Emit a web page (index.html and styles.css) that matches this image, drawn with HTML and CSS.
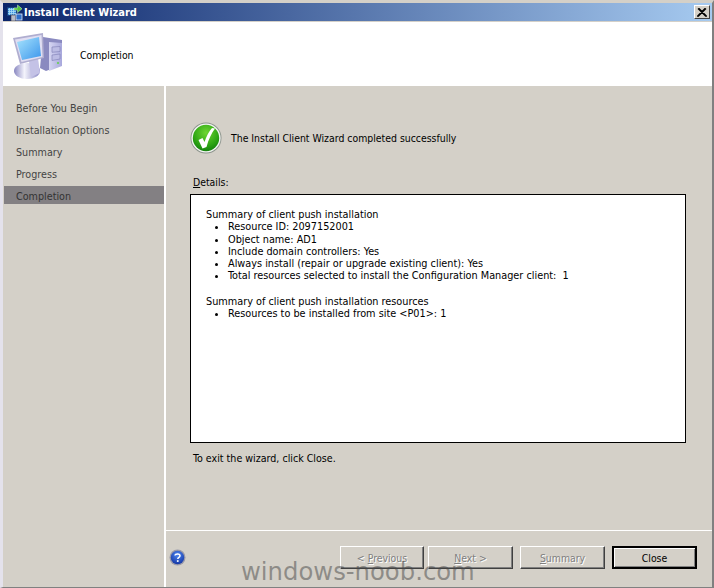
FILE: index.html
```html
<!DOCTYPE html>
<html lang="en">
<head>
<meta charset="utf-8">
<title>Install Client Wizard</title>
<link rel="stylesheet" href="styles.css">
</head>
<body>
<div class="window">
  <div class="titlebar">
    <svg class="title-icon" width="17" height="17" viewBox="0 0 17 17">
      <rect x="1.500" y="3.500" width="9" height="8" fill="#3f8fe0" stroke="#16407e" stroke-width="1"/>
      <path d="M3.500 4v7M5.500 4v7M7.500 4v7M2 5.500h8M2 7.500h8M2 9.500h8" stroke="#a8e0f8" stroke-width=".8"/>
      <path d="M8 4h3.500V1L16 4.800l-4.500 3.800V6H8z" fill="#52c43c" stroke="#cff5c0" stroke-width=".5"/>
      <rect x="5" y="11" width="4.500" height="6" fill="#b8bcc8" stroke="#334" stroke-width=".6"/>
      <rect x="10" y="10" width="6" height="6" fill="#2f6fc8" stroke="#dfe8f8" stroke-width=".8"/>
    </svg>
    <span class="title-text">Install Client Wizard</span>
    <span class="close-btn">
      <svg width="10" height="9" viewBox="0 0 10 9"><path d="M1 .5l8 8M9 .5l-8 8M2 .5l8 8M8 .5l-8 8" stroke="#000" stroke-width="1.200" fill="none"/></svg>
    </span>
  </div>
  <header class="banner">
    <svg class="computer" width="50" height="50" viewBox="0 0 50 50">
      <defs>
        <linearGradient id="scr" x1="0" y1="0" x2="1" y2="1"><stop offset="0" stop-color="#a8e4fd"/><stop offset="1" stop-color="#3c96ec"/></linearGradient>
        <linearGradient id="cas" x1="0" y1="0" x2="1" y2="0"><stop offset="0" stop-color="#d6d6f2"/><stop offset="1" stop-color="#a8a8dc"/></linearGradient>
        <linearGradient id="stand" x1="0" y1="0" x2="1" y2="0"><stop offset="0" stop-color="#8886c0"/><stop offset=".4" stop-color="#f4f4fc"/><stop offset="1" stop-color="#8a88c4"/></linearGradient>
      </defs>
      <path d="M30 6l19 3v25l-16 6-6-3z" fill="#8a8ac0"/>
      <path d="M36 11l13 1v23l-13 5z" fill="url(#cas)"/>
      <path d="M39 16l8-.5v5l-8 .8zM39 24l8-1v5l-8 1.500z" fill="#bcbce4" stroke="#7c7cb4" stroke-width=".6"/>
      <circle cx="45" cy="32" r="1.100" fill="#66d050"/>
      <ellipse cx="14" cy="40" rx="13" ry="8" fill="url(#stand)"/>
      <path d="M16 30l9-3 2 15-9 4z" fill="#c4c2e6"/>
      <path d="M0 7L30 2l1 25-24 6z" fill="#b0aed0"/>
      <path d="M2 8.500L28.500 4l1 22-21 5z" fill="#e0def2"/>
      <path d="M4 11l22-5 2 19-19 4z" fill="url(#scr)"/>
    </svg>
    <span class="banner-text">Completion</span>
  </header>
  <div class="main">
    <nav class="steps">
      <div class="step">Before You Begin</div>
      <div class="step">Installation Options</div>
      <div class="step">Summary</div>
      <div class="step">Progress</div>
      <div class="step step-current">Completion</div>
    </nav>
    <section class="panel">
      <div class="panel-body">
        <div class="status">
          <svg width="32" height="32" viewBox="0 0 32 32">
            <defs>
              <radialGradient id="grn" cx=".5" cy=".3" r=".75"><stop offset="0" stop-color="#6ed632"/><stop offset=".65" stop-color="#2ca414"/><stop offset="1" stop-color="#0f7a0c"/></radialGradient>
            </defs>
            <circle cx="16" cy="16" r="15.500" fill="#8c948c"/>
            <circle cx="16" cy="16" r="14.600" fill="#f4f6f4"/>
            <circle cx="16" cy="16" r="13.200" fill="url(#grn)"/>
            <path d="M8.500 18l4-2 2 4C16.500 14 19 9.500 22 6l3 .5c-3.500 4.500-6.500 11-8.500 18.500l-4 1.500z" fill="#fff"/>
          </svg>
          <span>The Install Client Wizard completed successfully</span>
        </div>
        <div class="details-label"><u>D</u>etails:</div>
        <div class="details">
          <p class="details-head">Summary of client push installation</p>
          <ul>
            <li>Resource ID: 2097152001</li>
            <li>Object name: AD1</li>
            <li>Include domain controllers: Yes</li>
            <li>Always install (repair or upgrade existing client): Yes</li>
            <li>Total resources selected to install the Configuration Manager client:&nbsp; 1</li>
          </ul>
          <p class="details-head details-gap">Summary of client push installation resources</p>
          <ul>
            <li>Resources to be installed from site &lt;P01&gt;: 1</li>
          </ul>
        </div>
        <div class="exit-note">To exit the wizard, click Close.</div>
      </div>
      <footer class="actions">
        <svg class="help" width="17" height="17" viewBox="0 0 17 17">
          <defs><radialGradient id="blu" cx=".5" cy=".3" r=".8"><stop offset="0" stop-color="#4f86ee"/><stop offset="1" stop-color="#0c2c9c"/></radialGradient></defs>
          <circle cx="8.500" cy="8.500" r="8" fill="#9a9aa8"/>
          <circle cx="8.500" cy="8.500" r="6.700" fill="url(#blu)"/>
          <path d="M6 6.500c.3-2 5-2.300 5 .3 0 1.700-2.200 1.500-2.200 3.200" fill="none" stroke="#fff" stroke-width="1.500"/>
          <rect x="7.900" y="11.200" width="1.700" height="1.700" fill="#fff"/>
        </svg>
        <div class="buttons">
          <button class="btn btn-prev" disabled>&lt; <u>P</u>revious</button>
          <button class="btn" disabled><u>N</u>ext &gt;</button>
          <button class="btn" disabled><u>S</u>ummary</button>
          <button class="btn btn-default">Close</button>
        </div>
      </footer>
    </section>
  </div>
</div>
<div class="watermark">windows-noob.com</div>
</body>
</html>
```
FILE: styles.css
```css
* { box-sizing: border-box; }
html, body { margin: 0; padding: 0; }
body {
  width: 714px;
  height: 588px;
  overflow: hidden;
  position: relative;
  background: #d4d0c8;
  font-family: "DejaVu Sans Condensed", "DejaVu Sans", sans-serif;
  font-stretch: condensed;
  font-size: 10.400px;
  color: #000;
}
.window {
  width: 714px;
  height: 588px;
  display: flex;
  flex-direction: column;
  background: #d4d0c8;
  border-left: 3px solid #e4e2ec;
  border-top: 3px solid #d4d0c8;
  border-right: 2px solid #808080;
  border-bottom: 1px solid #808080;
}
.titlebar {
  height: 18px;
  display: flex;
  align-items: center;
  padding: 0 2px 0 3px;
  background: linear-gradient(90deg, #0a246a, #a6caf0);
  color: #fff;
  flex: none;
}
.title-icon { flex: none; margin-right: 1px; }
.title-text {
  font-weight: 700;
  font-size: 11px;
  flex: 1;
}
.close-btn {
  width: 16px;
  height: 14px;
  display: flex;
  align-items: center;
  justify-content: center;
  background: #d4d0c8;
  border: 1px solid;
  border-color: #fff #404040 #404040 #fff;
}
.banner {
  height: 64px;
  margin-top: 1px;
  flex: none;
  background: #fff;
  display: flex;
  align-items: center;
  padding: 3px 0 0 10px;
}
.computer { flex: none; }
.banner-text { margin-left: 17px; margin-top: -1px; }
.main { flex: 1; display: flex; min-height: 0; }
.steps {
  width: 161px;
  padding-top: 12px;
  flex: none;
  color: #444;
  padding-left: 1px;
  font-size: 10.700px;
}
.step {
  height: 22px;
  line-height: 21px;
  padding-left: 12px;
}
.step-current {
  height: 18px;
  line-height: 21px;
  background: #838083;
  color: #333;
}
.panel {
  flex: 1;
  display: flex;
  flex-direction: column;
  border-left: 2px solid #fff;
  min-width: 0;
}
.panel-body { flex: 1; padding: 36px 26px 0 24px; }
.status { display: flex; align-items: center; gap: 9px; height: 32px; }
.status svg { flex: none; }
.details-label { margin: 21px 0 0 3px; height: 13px; line-height: 15px; }
.details {
  height: 249px;
  margin-top: 6px;
  background: #fff;
  border: 1px solid #000;
  padding: 14px 15px;
  line-height: 12.300px;
  font-size: 10.800px;
}
.details-head { margin: 0; }
.details-gap { margin-top: 13px; }
.details ul { margin: 0; padding: 0 0 0 22px; }
.exit-note { margin: 8px 0 0 3px; line-height: 14px; font-size: 10.600px; }
.actions {
  height: 57px;
  flex: none;
  border-top: 1px solid #fff;
  display: flex;
  align-items: flex-start;
  padding: 15px 15px 0 3px;
}
.help { flex: none; margin-top: 3px; }
.buttons { margin-left: auto; display: flex; gap: 7px; }
.btn {
  width: 85px;
  height: 23px;
  padding: 1px 0 0;
  font: inherit;
  background: #d4d0c8;
  border: 1px solid;
  border-color: #fff #404040 #404040 #fff;
  box-shadow: inset -1px -1px 0 #808080;
  color: #000;
}
.btn:disabled { color: #808080; text-shadow: 1px 1px 0 #fff; }
.btn-prev { width: 84px; margin-right: -3px; }
.btn-default {
  border: 2px solid #000;
  box-shadow: inset 1px 1px 0 #fff, inset -1px -1px 0 #808080;
}
.watermark {
  position: absolute;
  left: 241px;
  top: 556px;
  font-family: "DejaVu Sans", sans-serif;
  font-stretch: normal;
  font-size: 24.300px;
  line-height: 32px;
  color: rgba(70, 70, 70, 0.5);
  white-space: nowrap;
}
```
